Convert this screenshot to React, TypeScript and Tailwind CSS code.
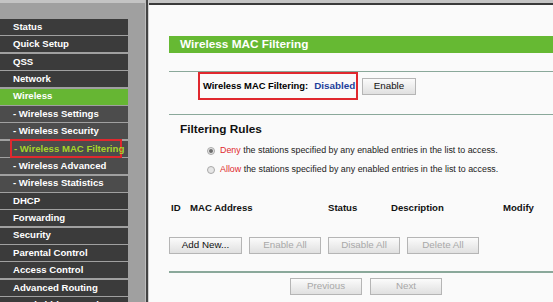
import React from "react";

const menu = [
  { label: "Status", kind: "top" },
  { label: "Quick Setup", kind: "top" },
  { label: "QSS", kind: "top" },
  { label: "Network", kind: "top" },
  { label: "Wireless", kind: "active" },
  { label: "- Wireless Settings", kind: "sub" },
  { label: "- Wireless Security", kind: "sub" },
  { label: "- Wireless MAC Filtering", kind: "current" },
  { label: "- Wireless Advanced", kind: "sub" },
  { label: "- Wireless Statistics", kind: "sub" },
  { label: "DHCP", kind: "top" },
  { label: "Forwarding", kind: "top" },
  { label: "Security", kind: "top" },
  { label: "Parental Control", kind: "top" },
  { label: "Access Control", kind: "top" },
  { label: "Advanced Routing", kind: "top" },
  { label: "Bandwidth Control", kind: "top" },
];

function Btn({ children, disabled, w }: { children: React.ReactNode; disabled?: boolean; w: string }) {
  return (
    <div
      className={`${w} h-[17px] shrink-0 flex items-center justify-center border border-[#b5b5b5] bg-gradient-to-b from-[#fbfbfb] to-[#e0e0e0] text-[9.8px] ${
        disabled ? "text-[#a8a8a8]" : "text-[#111]"
      }`}
    >
      {children}
    </div>
  );
}

function Radio({ checked }: { checked?: boolean }) {
  return (
    <span className="w-[8px] h-[8px] shrink-0 rounded-full border border-[#a9a9a9] bg-[#e6e6e6] flex items-center justify-center">
      {checked && <span className="w-[4px] h-[4px] rounded-full bg-[#6d6d6d]" />}
    </span>
  );
}

export default function App() {
  return (
    <div
      className="w-[553px] h-[302px] overflow-hidden flex items-start bg-[#fafafa]"
      style={{ fontFamily: '"Liberation Sans", Arial, sans-serif' }}
    >
      {/* Sidebar */}
      <div className="w-[145px] h-[302px] shrink-0 bg-[#a0a0a0]">
        <div className="h-[3px] bg-[#c4c4c4]" />
        <div className="w-[128px] pt-[16px] flex flex-col gap-[1.4px]">
          {menu.map((m) => (
            <div
              key={m.label}
              className={`h-[16px] shrink-0 flex items-center text-[9.6px] font-bold whitespace-nowrap ${
                m.kind === "active"
                  ? "bg-[#66b633] text-white pl-[13px]"
                  : m.kind === "sub"
                  ? "bg-[#4c4c4c] text-white pl-[13px]"
                  : m.kind === "current"
                  ? "bg-[#4c4c4c] text-[#a6d42a] pl-[10px]"
                  : "bg-[#3b3b3b] text-white pl-[13px]"
              }`}
            >
              {m.kind === "current" ? (
                <span className="border-2 border-[#e0282e] h-[19px] w-[112px] shrink-0 flex items-center pl-[2px]">
                  {m.label}
                </span>
              ) : (
                m.label
              )}
            </div>
          ))}
        </div>
      </div>
      <div className="w-[1px] h-[302px] shrink-0 bg-[#bdbdbd]" />
      <div className="w-[2px] h-[302px] shrink-0 bg-[#444]" />
      <div className="w-[1px] h-[302px] shrink-0 bg-[#d0d0d0]" />

      {/* Content */}
      <div className="flex-1 min-w-0 h-[302px]">
        <div className="h-[3px] bg-[#c4c4c4]" />
        <div className="h-[2px] bg-[#3a3a3a]" />
        <div className="pl-[20px] pt-[31px]">
          <div className="h-[17px] bg-[#66b933] flex items-center pl-[11px] text-white text-[11.8px] font-bold whitespace-nowrap">
            Wireless MAC Filtering
          </div>
          <div className="h-[1px] bg-[#8aa89a] mt-[18px]" />
          <div className="flex items-center h-[28px] pl-[29px]">
            <div className="h-[28px] w-[160px] shrink-0 border-2 border-[#e0282e] flex items-center pl-[3px] font-bold whitespace-nowrap">
              <span className="text-black text-[9.4px]">Wireless MAC Filtering:</span>
              <span className="text-[#1d3f9a] ml-[6px] text-[9.9px]">Disabled</span>
            </div>
            <div className="ml-[4px]">
              <Btn w="w-[54px]">Enable</Btn>
            </div>
          </div>
          <div className="h-[1px] bg-[#8aa89a] mt-[14px]" />
          <div className="h-[20px] mt-[5px] pl-[11px] flex items-center text-[11.8px] font-bold text-[#111]">
            Filtering Rules
          </div>
          <div className="pl-[38px] mt-[4px] text-[8.9px] text-[#222]">
            <div className="h-[14px] flex items-center gap-[5px] whitespace-nowrap">
              <Radio checked />
              <span>
                <span className="text-[#e0282e]">Deny</span> the stations specified by any enabled entries in the list to access.
              </span>
            </div>
            <div className="h-[14px] mt-[5px] flex items-center gap-[5px] whitespace-nowrap">
              <Radio />
              <span>
                <span className="text-[#e0282e]">Allow</span> the stations specified by any enabled entries in the list to access.
              </span>
            </div>
          </div>
          <div className="h-[14px] mt-[24px] pl-[2px] flex items-center text-[9.6px] font-bold text-[#111] whitespace-nowrap">
            <span className="w-[19px] shrink-0">ID</span>
            <span className="w-[138px] shrink-0">MAC Address</span>
            <span className="w-[63px] shrink-0">Status</span>
            <span className="w-[112px] shrink-0">Description</span>
            <span>Modify</span>
          </div>
          <div className="flex gap-[7px] mt-[22px]">
            <Btn w="w-[73px]">Add New...</Btn>
            <Btn w="w-[72px]" disabled>Enable All</Btn>
            <Btn w="w-[72px]" disabled>Disable All</Btn>
            <Btn w="w-[72px]" disabled>Delete All</Btn>
          </div>
          <div className="h-[2px] bg-[#8aa89a] mt-[17px]" />
          <div className="flex gap-[8px] mt-[5px] pl-[121px]">
            <Btn w="w-[72px]" disabled>Previous</Btn>
            <Btn w="w-[72px]" disabled>Next</Btn>
          </div>
        </div>
      </div>
    </div>
  );
}
